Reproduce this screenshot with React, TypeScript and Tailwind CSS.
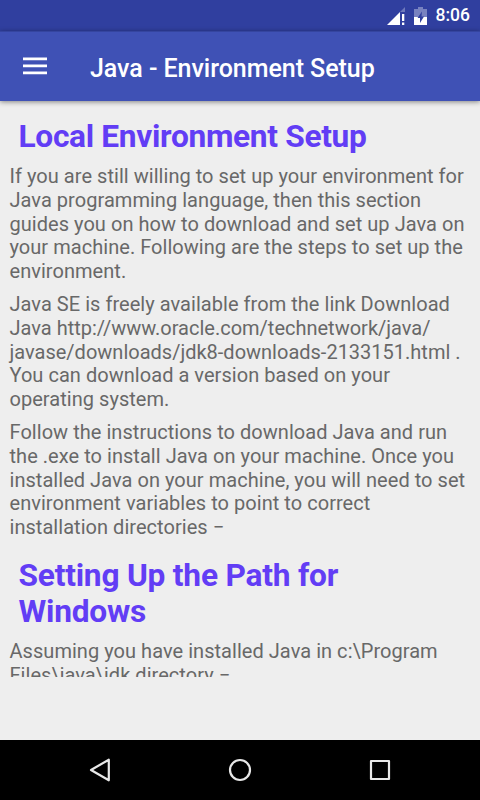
import React from 'react';

const paragraphs: string[][] = [
  [
    'If you are still willing to set up your environment for',
    'Java programming language, then this section',
    'guides you on how to download and set up Java on',
    'your machine. Following are the steps to set up the',
    'environment.',
  ],
  [
    'Java SE is freely available from the link Download',
    'Java http://www.oracle.com/technetwork/java/',
    'javase/downloads/jdk8-downloads-2133151.html .',
    'You can download a version based on your',
    'operating system.',
  ],
  [
    'Follow the instructions to download Java and run',
    'the .exe to install Java on your machine. Once you',
    'installed Java on your machine, you will need to set',
    'environment variables to point to correct',
    'installation directories −',
  ],
];

const Paragraph: React.FC<{ lines: string[] }> = ({ lines }) => (
  <p className="mb-[9px] whitespace-nowrap pl-[9.5px] text-[20px] leading-[23.8px] tracking-[0.04px] text-[#686868]">
    {lines.map((line) => (
      <span key={line} className={line.includes('/') ? 'block tracking-normal' : 'block'}>{line}</span>
    ))}
  </p>
);

const StatusBar: React.FC = () => (
  <div className="flex h-[31px] items-center justify-end bg-[#303f9f] pr-[10px] pt-[1px] text-white">
    <svg className="mr-[9px] h-[18px] w-[18px]" viewBox="0 0 18 18" fill="currentColor">
      <path d="M18 0V5H13Z" opacity=".3" />
      <path d="M0 18 13 5V18Z" />
      <path d="M15 7h2.3v7H15zM15 15.5h2.3V18H15z" />
    </svg>
    <svg className="mr-[9px] h-[18px] w-[13px]" viewBox="0 0 13 18" fill="currentColor">
      <path d="M4 0h5v2h4v8H0V2h4Z" opacity=".35" />
      <path d="M0 10h13v8H0Z" />
      <path d="M8 4.5 3.5 11H6v5l4-6.5H7.5Z" fill="#303f9f" />
    </svg>
    <span className="text-[17.5px] font-medium leading-none">8:06</span>
  </div>
);

const AppBar: React.FC = () => (
  <header className="relative flex h-[70px] items-center border-t border-[#35459f] bg-[#3f51b5] text-white shadow-[0_1px_5px_rgba(0,0,0,0.45)]">
    <svg className="mb-[2px] ml-[23px] h-[18px] w-6" viewBox="0 0 24 18" fill="currentColor">
      <path d="M0 .5h24v2.7H0zM0 7.5h24v2.7H0zM0 14.5h24v2.7H0z" />
    </svg>
    <h1 className="ml-[43px] whitespace-nowrap pt-[4px] text-[25px] font-medium tracking-[-0.04px]">Java - Environment Setup</h1>
  </header>
);

const NavBar: React.FC = () => (
  <nav className="flex h-[60px] items-center justify-center bg-black">
    <svg className="h-[60px] w-[320px]" viewBox="0 0 320 60" fill="none" stroke="#e8e8e8" strokeWidth="2.2" strokeLinejoin="round">
      <path d="M11 30 28.8 19.7v20.6Z" />
      <circle cx="160" cy="30" r="10" />
      <path d="M291 21h18v18h-18z" />
    </svg>
  </nav>
);

const App: React.FC = () => (
  <div className="flex h-[800px] w-[480px] flex-col overflow-hidden bg-[#eeeeee] font-[Roboto,sans-serif]">
    <StatusBar />
    <AppBar />
    <main className="h-[576px] overflow-hidden pt-[18px]">
      <h2 className="mb-[10px] whitespace-nowrap pl-[18.5px] text-[31.7px] font-bold leading-[36px] tracking-[-0.32px] text-[#623df5]">
        Local Environment Setup
      </h2>
      {paragraphs.map((lines) => (
        <Paragraph key={lines[0]} lines={lines} />
      ))}
      <h2 className="mb-[10px] mt-[18px] pl-[18.5px] text-[31.7px] font-bold leading-[36px] tracking-[-0.22px] text-[#623df5]">
        <span className="block">Setting Up the Path for</span>
        <span className="block">Windows</span>
      </h2>
      <Paragraph lines={['Assuming you have installed Java in c:\\Program', 'Files\\java\\jdk directory −']} />
    </main>
    <div className="flex-1" />
    <NavBar />
  </div>
);

export default App;
